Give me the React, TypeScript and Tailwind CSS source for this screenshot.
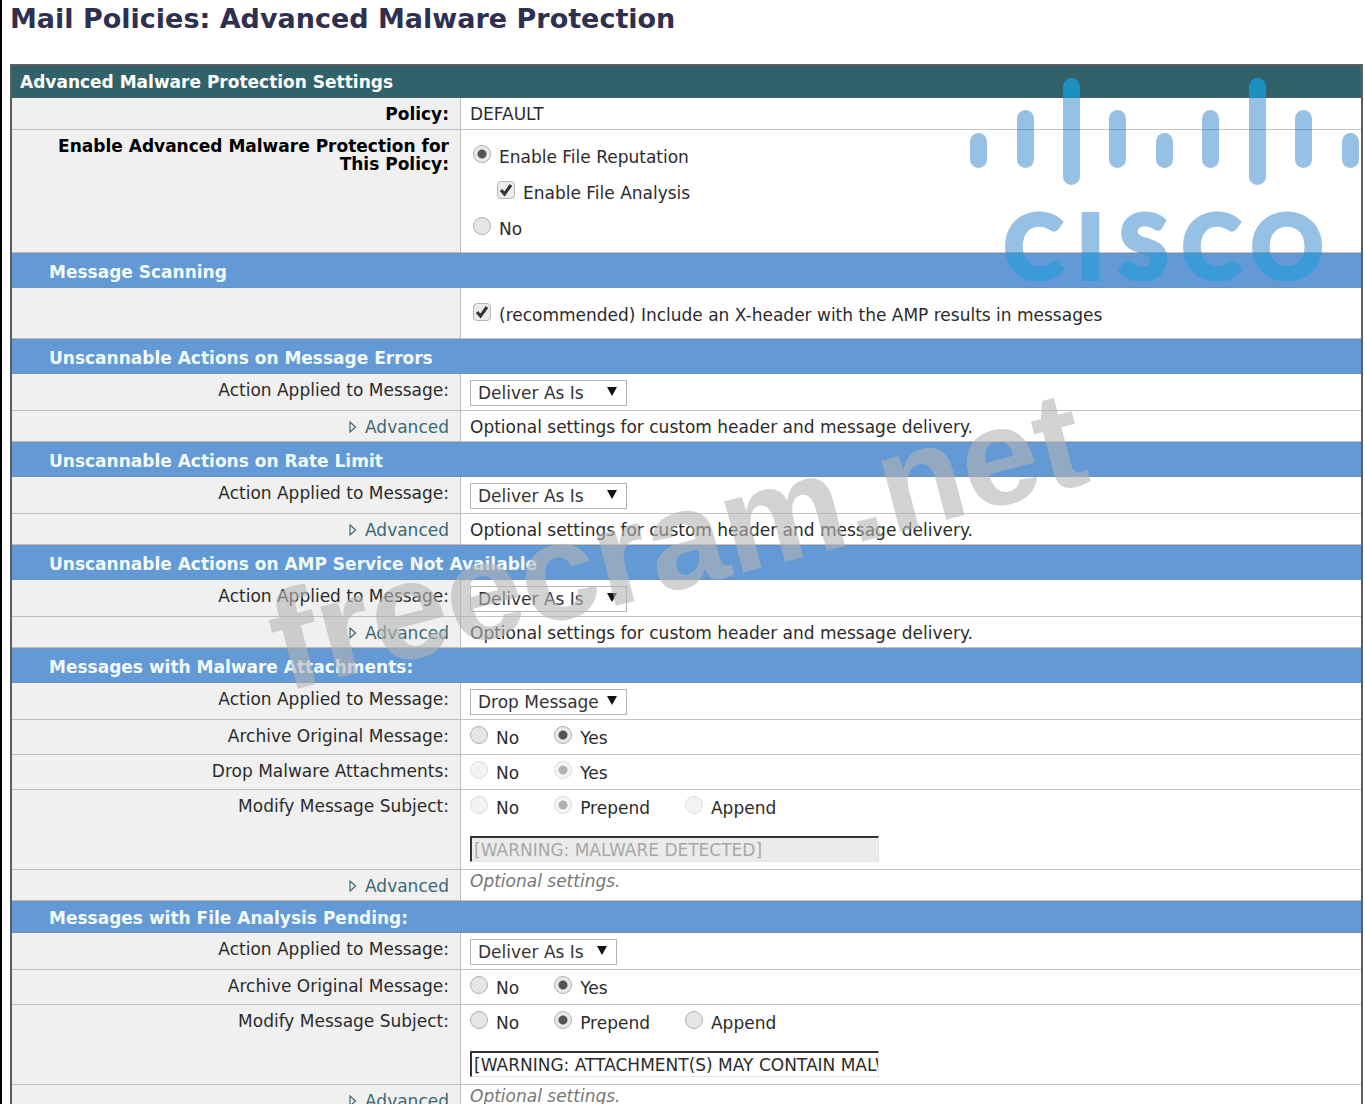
import React, { useId } from 'react';
import clsx from 'clsx';

interface RadioOption {
  label: string;
}

interface RadioProps {
  name: string;
  label: string;
  checked?: boolean;
  disabled?: boolean;
}

function Radio({ name, label, checked, disabled }: RadioProps) {
  return (
    <label className="flex items-start gap-2">
      <input
        type="radio"
        name={name}
        defaultChecked={checked}
        disabled={disabled}
        className="size-[18px] shrink-0 appearance-none rounded-full border border-[#b0b0b0] bg-[#e6e6e6] checked:bg-[radial-gradient(circle,#555_0,#555_4px,#e9e9e9_5px)] disabled:opacity-45"
      />
      <span className="pt-[3px]">{label}</span>
    </label>
  );
}

function Checkbox({ label }: { label: string }) {
  return (
    <label className="flex items-start gap-2">
      <span className="grid size-[18px] shrink-0">
        <input
          type="checkbox"
          defaultChecked
          className="peer col-start-1 row-start-1 appearance-none rounded-sm border border-[#b5b5b5] bg-[#ececec]"
        />
        <svg
          viewBox="0 0 18 18"
          className="pointer-events-none invisible col-start-1 row-start-1 peer-checked:visible"
          fill="none"
          stroke="#333"
          strokeWidth="3"
        >
          <path d="M4 9l3.5 4L14 4" />
        </svg>
      </span>
      <span className="pt-[3px]">{label}</span>
    </label>
  );
}

function SectionRow({ title, short }: { title: string; short?: boolean }) {
  return (
    <tr className={short ? 'h-8' : 'h-[35px]'}>
      <th
        colSpan={2}
        scope="colgroup"
        className="border-y border-[#6c93bf] bg-[#6399d4] pt-0.5 pl-[37px] text-left align-middle font-bold text-[#f2fbff]"
      >
        {title}
      </th>
    </tr>
  );
}

const labelCell = 'border-r border-b border-[#bcbcbc] bg-[#f0f0f0] pt-[7px] pr-[11px] text-right align-top font-normal';
const valueCell = 'border-b border-[#c4c4c4] pl-[9px] align-top';

function ActionRow({ value, narrow }: { value: string; narrow?: boolean }) {
  const id = useId();
  return (
    <tr className="h-[37px]">
      <th scope="row" className={labelCell}>
        <label htmlFor={id}>Action Applied to Message:</label>
      </th>
      <td className={clsx(valueCell, 'pt-1.5')}>
        <div className={clsx('grid h-[26px]', narrow ? 'w-[147px]' : 'w-[157px]')}>
          <select
            id={id}
            defaultValue={value}
            className="col-start-1 row-start-1 appearance-none border border-[#b4b4b4] bg-white pl-[7px] leading-6 text-[#333]"
          >
            <option>Deliver As Is</option>
            <option>Drop Message</option>
          </select>
          <svg
            viewBox="0 0 10 9"
            className="pointer-events-none col-start-1 row-start-1 mt-[7px] mr-[10px] h-[9px] w-[10px] justify-self-end"
          >
            <path d="M0 0h10L5 9z" fill="#111" />
          </svg>
        </div>
      </td>
    </tr>
  );
}

function AdvancedRow({ children, optional }: { children: string; optional?: boolean }) {
  return (
    <tr className="h-[31px]">
      <th scope="row" className={clsx(labelCell, 'leading-4')}>
        <button type="button" className="inline-flex items-center gap-2 pt-px text-[#3a6876]">
          <svg viewBox="0 0 8 12" className="h-3 w-2" fill="none" stroke="currentColor" strokeWidth="1.2">
            <path d="M1 1v10l5.500-5z" />
          </svg>
          Advanced
        </button>
      </th>
      <td className={clsx(valueCell, optional ? 'pt-0.5 text-[#777] italic' : 'pt-[7px]')}>{children}</td>
    </tr>
  );
}

interface RadioRowProps {
  label: string;
  options: RadioOption[];
  checked: number;
  disabled?: boolean;
  subject?: string;
}

function RadioRow({ label, options, checked, disabled, subject }: RadioRowProps) {
  const id = useId();
  return (
    <tr className={subject ? 'h-20' : 'h-[35px]'}>
      <th scope="row" id={id} className={labelCell}>
        {label}
      </th>
      <td className={clsx(valueCell, 'pt-1.5')}>
        <div role="radiogroup" aria-labelledby={id} className="flex gap-[35px]">
          {options.map((option, i) => (
            <Radio key={option.label} name={id} label={option.label} checked={i === checked} disabled={disabled} />
          ))}
        </div>
        {subject && (
          <input
            type="text"
            aria-labelledby={id}
            defaultValue={subject}
            disabled={disabled}
            className="mt-[19px] block h-[26px] w-[409px] border border-t-2 border-l-2 border-[#e4e4e4] border-t-[#333] border-l-[#333] bg-white pl-0.5 disabled:bg-[#ebebeb] disabled:text-[#a8a8a8]"
          />
        )}
      </td>
    </tr>
  );
}

// x offset, top and height of every bar in the logo
const bars = [
  [0, 55, 35],
  [47, 32, 58],
  [93, 0, 107],
  [139, 32, 58],
  [186, 55, 35],
  [232, 32, 58],
  [279, 0, 107],
  [325, 32, 58],
  [372, 55, 35],
];

function CiscoLogo() {
  return (
    <svg
      width="389"
      height="210"
      viewBox="0 0 389 210"
      className="pointer-events-none absolute top-[78px] right-[6px]"
    >
      <defs>
        <linearGradient id="logo-tint" gradientUnits="userSpaceOnUse" x1="0" y1="0" x2="0" y2="210">
          <stop offset="0.095" stopColor="#0daffa" stopOpacity="0.6" />
          <stop offset="0.095" stopColor="#0068be" stopOpacity="0.41" />
          <stop offset="0.833" stopColor="#0068be" stopOpacity="0.41" />
          <stop offset="0.833" stopColor="#009ede" stopOpacity="0.41" />
        </linearGradient>
        <mask id="logo-shape" maskUnits="userSpaceOnUse" x="0" y="0" width="389" height="210">
          {bars.map(([x, y, height]) => (
            <rect key={x} x={x} y={y} width="17" height={height} rx="8.500" fill="#fff" />
          ))}
          <text
            x="34 107 149 212 281"
            y="201"
            fontSize="89"
            fontWeight="900"
            fill="#fff"
            stroke="#fff"
            strokeWidth="4"
            className="font-[Lato,sans-serif]"
          >
            CISCO
          </text>
        </mask>
      </defs>
      <rect width="389" height="210" fill="url(#logo-tint)" mask="url(#logo-shape)" />
    </svg>
  );
}

function Watermark() {
  return (
    <svg
      width="860"
      height="330"
      viewBox="0 0 860 330"
      className="pointer-events-none absolute top-[380px] left-[260px]"
    >
      <text
        transform="translate(23 312) rotate(-14.600)"
        fontSize="139"
        fontWeight="700"
        fill="#b4b4b4"
        fillOpacity="0.6"
        className="font-['Liberation_Sans',sans-serif]"
      >
        freecram.net
      </text>
    </svg>
  );
}

const yesNo: RadioOption[] = [{ label: 'No' }, { label: 'Yes' }];
const subjectOptions: RadioOption[] = [{ label: 'No' }, { label: 'Prepend' }, { label: 'Append' }];
const deliveryText = 'Optional settings for custom header and message delivery.';

export default function App() {
  return (
    <div className="relative h-screen overflow-hidden border-l-2 border-black bg-white pr-0.5 pl-2 font-['DejaVu_Sans',Verdana,sans-serif] text-[17px] leading-[18px] text-[#2b2b2b]">
      <h1 className="pt-1 pb-[30px] text-[27px] leading-[30px] font-bold text-[#2e3050]">
        Mail Policies: Advanced Malware Protection
      </h1>

      <table className="w-full table-fixed border-separate border-spacing-0 border-2 border-[#5b5f60]">
        <colgroup>
          <col className="w-[449px]" />
          <col />
        </colgroup>
        <thead>
          <tr className="h-8">
            <th colSpan={2} className="border-b border-[#4c5f62] bg-[#316269] pl-2 text-left align-middle text-white">
              Advanced Malware Protection Settings
            </th>
          </tr>
        </thead>
        <tbody>
          <tr className="h-8">
            <th scope="row" className={clsx(labelCell, 'text-black')}>
              <b>Policy:</b>
            </th>
            <td className={clsx(valueCell, 'pt-[7px]')}>DEFAULT</td>
          </tr>
          <tr className="h-[123px]">
            <th scope="row" id="enable-amp" className={clsx(labelCell, 'pl-10 text-black')}>
              <b>Enable Advanced Malware Protection for This Policy:</b>
            </th>
            <td className={clsx(valueCell, 'pt-[15px]')}>
              <div role="radiogroup" aria-labelledby="enable-amp" className="flex flex-col gap-[15px] pl-[3px]">
                <Radio name="amp" label="Enable File Reputation" checked />
                <div className="pl-6">
                  <Checkbox label="Enable File Analysis" />
                </div>
                <Radio name="amp" label="No" />
              </div>
            </td>
          </tr>

          <SectionRow title="Message Scanning" />
          <tr className="h-[51px]">
            <td className={labelCell} />
            <td className={clsx(valueCell, 'pt-[15px]')}>
              <div className="pl-[3px]">
                <Checkbox label="(recommended) Include an X-header with the AMP results in messages" />
              </div>
            </td>
          </tr>

          <SectionRow title="Unscannable Actions on Message Errors" />
          <ActionRow value="Deliver As Is" />
          <AdvancedRow>{deliveryText}</AdvancedRow>

          <SectionRow title="Unscannable Actions on Rate Limit" />
          <ActionRow value="Deliver As Is" />
          <AdvancedRow>{deliveryText}</AdvancedRow>

          <SectionRow title="Unscannable Actions on AMP Service Not Available" />
          <ActionRow value="Deliver As Is" />
          <AdvancedRow>{deliveryText}</AdvancedRow>

          <SectionRow title="Messages with Malware Attachments:" />
          <ActionRow value="Drop Message" />
          <RadioRow label="Archive Original Message:" options={yesNo} checked={1} />
          <RadioRow label="Drop Malware Attachments:" options={yesNo} checked={1} disabled />
          <RadioRow
            label="Modify Message Subject:"
            options={subjectOptions}
            checked={1}
            subject="[WARNING: MALWARE DETECTED]"
            disabled
          />
          <AdvancedRow optional>Optional settings.</AdvancedRow>

          <SectionRow title="Messages with File Analysis Pending:" short />
          <ActionRow value="Deliver As Is" narrow />
          <RadioRow label="Archive Original Message:" options={yesNo} checked={1} />
          <RadioRow
            label="Modify Message Subject:"
            options={subjectOptions}
            checked={1}
            subject="[WARNING: ATTACHMENT(S) MAY CONTAIN MALWARE]"
          />
          <AdvancedRow optional>Optional settings.</AdvancedRow>
        </tbody>
      </table>

      <Watermark />
      <CiscoLogo />
    </div>
  );
}
